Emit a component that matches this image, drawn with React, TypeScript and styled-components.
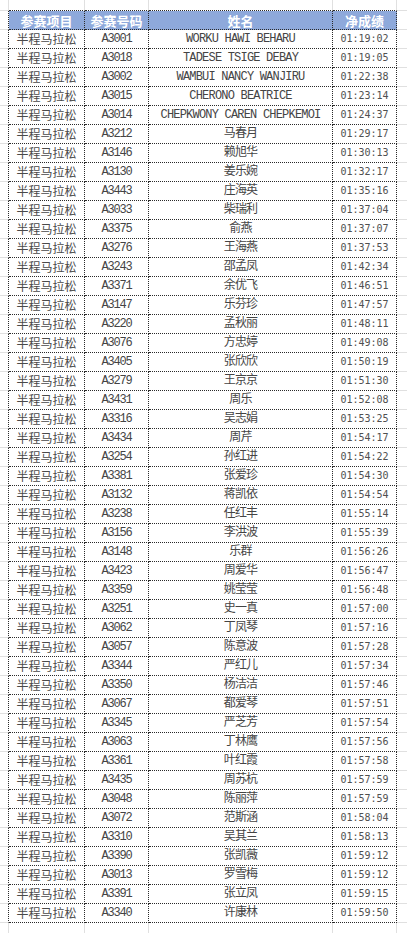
import React from "react";
import styled, { createGlobalStyle, css } from "styled-components";

const Global = createGlobalStyle`
  html, body { margin: 0; padding: 0; background: #ffffff; }
  body { width: 407px; height: 933px; overflow: hidden; }
`;

const GRID = "#e0e0e0";
const DOT = "#2a2a2a";
const INK = "#444444";

type Result = [string, string, string];

const results: Result[] = [
  ["A3001", "WORKU HAWI BEHARU", "01:19:02"],
  ["A3018", "TADESE TSIGE DEBAY", "01:19:05"],
  ["A3002", "WAMBUI NANCY WANJIRU", "01:22:38"],
  ["A3015", "CHERONO BEATRICE", "01:23:14"],
  ["A3014", "CHEPKWONY CAREN CHEPKEMOI", "01:24:37"],
  ["A3212", "马春月", "01:29:17"],
  ["A3146", "赖旭华", "01:30:13"],
  ["A3130", "姜乐婉", "01:32:17"],
  ["A3443", "庄海英", "01:35:16"],
  ["A3033", "柴瑞利", "01:37:04"],
  ["A3375", "俞燕", "01:37:07"],
  ["A3276", "王海燕", "01:37:53"],
  ["A3243", "邵孟凤", "01:42:34"],
  ["A3371", "余优飞", "01:46:51"],
  ["A3147", "乐芬珍", "01:47:57"],
  ["A3220", "孟秋丽", "01:48:11"],
  ["A3076", "方忠婷", "01:49:08"],
  ["A3405", "张欣欣", "01:50:19"],
  ["A3279", "王京京", "01:51:30"],
  ["A3431", "周乐", "01:52:08"],
  ["A3316", "吴志娟", "01:53:25"],
  ["A3434", "周芹", "01:54:17"],
  ["A3254", "孙红进", "01:54:22"],
  ["A3381", "张爱珍", "01:54:30"],
  ["A3132", "蒋凯依", "01:54:54"],
  ["A3238", "任红丰", "01:55:14"],
  ["A3156", "李洪波", "01:55:39"],
  ["A3148", "乐群", "01:56:26"],
  ["A3423", "周爱华", "01:56:47"],
  ["A3359", "姚莹莹", "01:56:48"],
  ["A3251", "史一真", "01:57:00"],
  ["A3062", "丁凤琴", "01:57:16"],
  ["A3057", "陈意波", "01:57:28"],
  ["A3344", "严红儿", "01:57:34"],
  ["A3350", "杨洁洁", "01:57:46"],
  ["A3067", "都爱琴", "01:57:51"],
  ["A3345", "严芝芳", "01:57:54"],
  ["A3063", "丁林鹰", "01:57:56"],
  ["A3361", "叶红霞", "01:57:58"],
  ["A3435", "周苏杭", "01:57:59"],
  ["A3048", "陈丽萍", "01:57:59"],
  ["A3072", "范斯涵", "01:58:04"],
  ["A3310", "吴其兰", "01:58:13"],
  ["A3390", "张凯薇", "01:59:12"],
  ["A3013", "罗雪梅", "01:59:12"],
  ["A3391", "张立凤", "01:59:15"],
  ["A3340", "许康林", "01:59:50"],
];

const Sheet = styled.div`
  display: flex;
  flex-direction: column;
  width: 407px;
  height: 933px;
  overflow: hidden;
  background: #ffffff;
`;

const Row = styled.div<{ $kind: "top" | "body" | "bottom" }>`
  display: grid;
  grid-template-columns: 9px 76px 64px 184px 64px 1fr;
  flex: none;
  height: ${(p) => (p.$kind === "top" ? "11px" : "19px")};
  ${(p) =>
    p.$kind === "bottom" &&
    css`
      flex: 1 1 auto;
    `}
`;

const Gutter = styled.div<{ $edgeRight?: boolean; $edgeBottom?: boolean; $noBottom?: boolean; $noRight?: boolean }>`
  box-sizing: border-box;
  border-right: 1px solid ${GRID};
  border-bottom: 1px solid ${GRID};
  ${(p) => p.$edgeRight && css`border-right: 1px dotted ${DOT};`}
  ${(p) => p.$edgeBottom && css`border-bottom: 1px dotted ${DOT};`}
  ${(p) => p.$noBottom && css`border-bottom: none;`}
  ${(p) => p.$noRight && css`border-right: none;`}
`;

type Col = "event" | "bib" | "name" | "time";

const fontFor = (col: Col) => {
  switch (col) {
    case "event":
      return css`
        font-family: "Noto Sans CJK SC", sans-serif;
        font-size: 12px;
        color: #4a4a4a;
      `;
    case "bib":
      return css`
        font-family: "Liberation Mono", "Noto Sans CJK SC", monospace;
        font-size: 12px;
        letter-spacing: -1.2px;
      `;
    case "name":
      return css`
        font-family: "Liberation Mono", "Noto Sans CJK SC", monospace;
        font-size: 12px;
        letter-spacing: -0.8px;
      `;
    case "time":
      return css`
        font-family: "DejaVu Sans Mono", monospace;
        font-size: 10px;
        color: #505050;
      `;
  }
};

const Cell = styled.div<{ $col: Col }>`
  box-sizing: border-box;
  display: flex;
  align-items: center;
  justify-content: center;
  white-space: nowrap;
  overflow: hidden;
  color: ${INK};
  line-height: 1;
  border-right: 1px dotted ${DOT};
  border-bottom: 1px dotted ${DOT};
  ${(p) => fontFor(p.$col)}
`;

const HeadCell = styled.div`
  box-sizing: border-box;
  display: flex;
  align-items: center;
  justify-content: center;
  background: #8ea9db;
  color: #ffffff;
  font-family: "Noto Sans CJK SC", sans-serif;
  font-size: 13px;
  font-weight: 700;
  line-height: 1;
  border-right: 1px dotted ${DOT};
  border-bottom: 1px dotted ${DOT};
`;

const headers = ["参赛项目", "参赛号码", "姓名", "净成绩"];

export default function App() {
  return (
    <>
      <Global />
      <Sheet>
        <Row $kind="top">
          <Gutter />
          <Gutter $edgeBottom />
          <Gutter $edgeBottom />
          <Gutter $edgeBottom />
          <Gutter $edgeBottom />
          <Gutter $noRight />
        </Row>
        <Row $kind="body">
          <Gutter $edgeRight />
          {headers.map((h) => (
            <HeadCell key={h}>{h}</HeadCell>
          ))}
          <Gutter $noRight />
        </Row>
        {results.map(([bib, name, time]) => (
          <Row $kind="body" key={bib}>
            <Gutter $edgeRight />
            <Cell $col="event">半程马拉松</Cell>
            <Cell $col="bib">{bib}</Cell>
            <Cell $col="name">{name}</Cell>
            <Cell $col="time">{time}</Cell>
            <Gutter $noRight />
          </Row>
        ))}
        <Row $kind="bottom">
          <Gutter $noBottom />
          <Gutter $noBottom />
          <Gutter $noBottom />
          <Gutter $noBottom />
          <Gutter $noBottom />
          <Gutter $noBottom $noRight />
        </Row>
      </Sheet>
    </>
  );
}
